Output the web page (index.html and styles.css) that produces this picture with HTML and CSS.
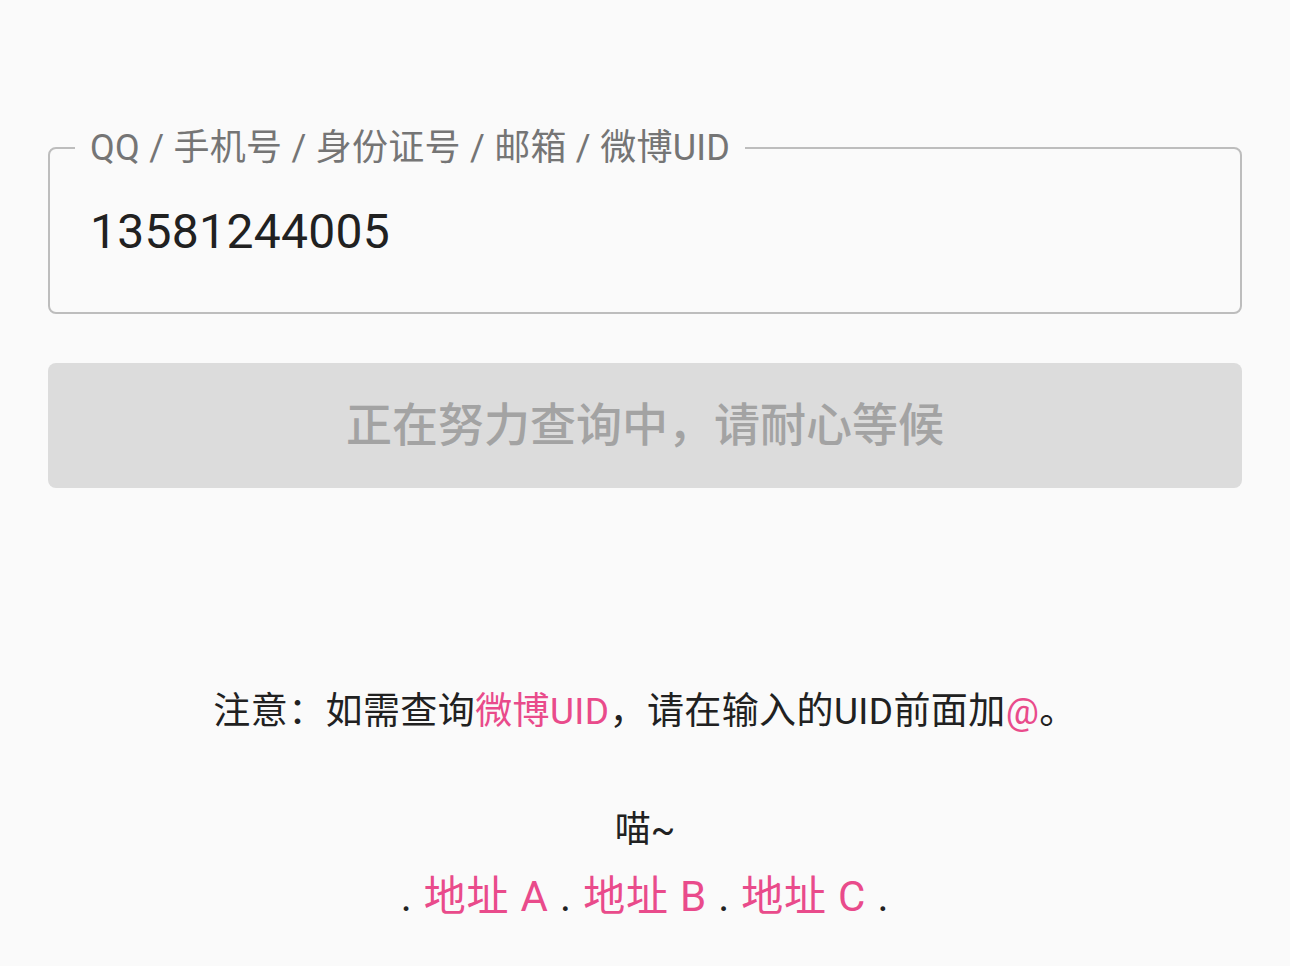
FILE: index.html
```html
<!DOCTYPE html>
<html lang="zh-CN">
<head>
<meta charset="utf-8">
<title>查询</title>
<link rel="stylesheet" href="styles.css">
</head>
<body>
<main class="page">
  <fieldset class="field">
    <legend class="field-label">QQ / 手机号 / 身份证号 / 邮箱 / 微博UID</legend>
    <input class="field-input" type="text" value="13581244005" readonly>
  </fieldset>
  <button class="submit" type="button" disabled>正在努力查询中，请耐心等候</button>
  <p class="note">注意：如需查询<span class="pink">微博UID</span>，请在输入的UID前面加<span class="pink">@</span>。</p>
  <p class="meow">喵~</p>
  <p class="links"><span class="dot">.</span> <a class="link" href="#">地址 A</a> <span class="dot">.</span> <a class="link" href="#">地址 B</a> <span class="dot">.</span> <a class="link" href="#">地址 C</a> <span class="dot">.</span></p>
</main>
</body>
</html>
```

FILE: styles.css
```css
html, body {
  margin: 0;
  padding: 0;
  background: #fafafa;
}
body {
  font-family: Roboto, "Noto Sans CJK SC", sans-serif;
  color: #212121;
}
.page {
  padding: 128px 48px 0;
  display: flex;
  flex-direction: column;
}
.field {
  margin: 0;
  border: 2px solid #bdbdbd;
  border-radius: 8px;
  padding: 0 40px 53px;
  min-width: 0;
}
.field-label {
  margin-left: -15px;
  padding: 0 15px;
  font-size: 36px;
  line-height: 40px;
  letter-spacing: 0.25px;
  color: #757575;
}
.field-input {
  display: block;
  box-sizing: border-box;
  width: 100%;
  margin-top: 35px;
  height: 56px;
  padding: 0;
  border: none;
  outline: none;
  background: transparent;
  font-family: Roboto, "Noto Sans CJK SC", sans-serif;
  font-size: 48px;
  letter-spacing: 0.3px;
  color: #212121;
}
.submit {
  margin-top: 49px;
  height: 125px;
  padding: 0 0 10px;
  border: none;
  border-radius: 8px;
  background: #dcdcdc;
  color: #a3a3a3;
  font-family: Roboto, "Noto Sans CJK SC", sans-serif;
  font-size: 46px;
  font-weight: 500;
  letter-spacing: 0;
}
.note {
  margin: 199px 0 0;
  text-align: center;
  font-size: 37px;
  line-height: 50px;
  letter-spacing: 0.4px;
}
.pink {
  color: #e94b8b;
}
.meow {
  margin: 68px 0 0;
  text-align: center;
  font-size: 36px;
  line-height: 50px;
}
.links {
  margin: 14px 0 0;
  text-align: center;
  font-size: 42px;
  line-height: 56px;
  letter-spacing: 0.8px;
}
.dot {
  color: #212121;
}
.link {
  color: #e94b8b;
  text-decoration: none;
}
```
